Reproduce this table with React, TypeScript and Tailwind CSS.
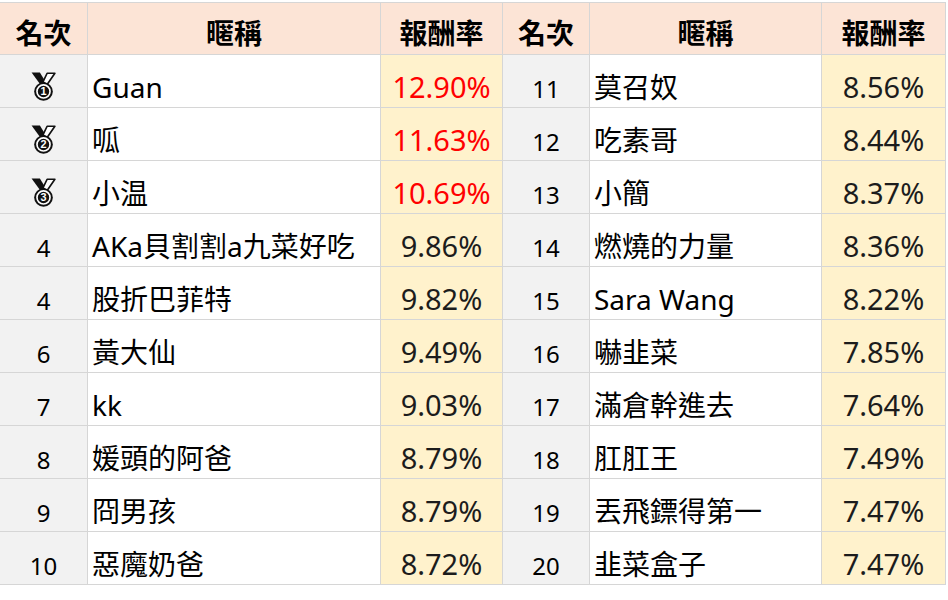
import React from 'react';

type Row = { rank: number; name: string; rate: string };

const left: Row[] = [
  { rank: 1, name: 'Guan', rate: '12.90%' },
  { rank: 2, name: '呱', rate: '11.63%' },
  { rank: 3, name: '小温', rate: '10.69%' },
  { rank: 4, name: 'AKa貝割割a九菜好吃', rate: '9.86%' },
  { rank: 4, name: '股折巴菲特', rate: '9.82%' },
  { rank: 6, name: '黃大仙', rate: '9.49%' },
  { rank: 7, name: 'kk', rate: '9.03%' },
  { rank: 8, name: '媛頭的阿爸', rate: '8.79%' },
  { rank: 9, name: '冏男孩', rate: '8.79%' },
  { rank: 10, name: '惡魔奶爸', rate: '8.72%' },
];

const right: Row[] = [
  { rank: 11, name: '莫召奴', rate: '8.56%' },
  { rank: 12, name: '吃素哥', rate: '8.44%' },
  { rank: 13, name: '小簡', rate: '8.37%' },
  { rank: 14, name: '燃燒的力量', rate: '8.36%' },
  { rank: 15, name: 'Sara Wang', rate: '8.22%' },
  { rank: 16, name: '嚇韭菜', rate: '7.85%' },
  { rank: 17, name: '滿倉幹進去', rate: '7.64%' },
  { rank: 18, name: '肛肛王', rate: '7.49%' },
  { rank: 19, name: '丟飛鏢得第一', rate: '7.47%' },
  { rank: 20, name: '韭菜盒子', rate: '7.47%' },
];

function Medal({ n }: { n: number }) {
  return (
    <svg width="25" height="29" viewBox="0 0 24 28">
      {/* ribbons */}
      <polygon points="0.5,0.5 8.5,0.5 15,11 10,13.5" fill="#111" />
      <polygon points="15.5,1.2 23,1.2 15.5,12 11.5,9.5" fill="#fff" stroke="#111" strokeWidth="1.6" strokeLinejoin="round" />
      {/* medal */}
      <circle cx="12" cy="18.8" r="9" fill="#111" />
      <circle cx="12" cy="18.8" r="6.3" fill="#111" stroke="#fff" strokeWidth="1.6" />
      <text
        x="12"
        y="22.6"
        textAnchor="middle"
        fontSize="10.5"
        fontWeight="700"
        fill="#fff"
        fontFamily="'Liberation Sans', Arial, sans-serif"
      >
        {n}
      </text>
    </svg>
  );
}

const line = 'border-b border-r border-[#d6d6d6]';

function Header() {
  const cls = `flex items-end justify-center pb-[7px] bg-[#fce4d6] font-bold text-[28px] leading-none text-black ${line}`;
  return (
    <>
      <div className={cls}>名次</div>
      <div className={cls}>暱稱</div>
      <div className={cls}>報酬率</div>
      <div className={cls}>名次</div>
      <div className={cls}>暱稱</div>
      <div className={cls}>報酬率</div>
    </>
  );
}

function Cells({ row }: { row: Row }) {
  const top = row.rank <= 3;
  return (
    <>
      <div className={`flex items-end justify-center pb-[6px] bg-[#f2f2f2] text-[24px] leading-none text-black ${line}`}>
        {top ? <Medal n={row.rank} /> : row.rank}
      </div>
      <div className={`flex items-end pl-[4px] pb-[6px] bg-white text-[28px] leading-none text-black whitespace-nowrap ${line}`}>
        {row.name}
      </div>
      <div
        className={`flex items-end justify-center pb-[6px] bg-[#fff2cc] text-[29px] leading-none ${top ? 'text-[#ff0000]' : 'text-[#1c1c1c]'} ${line}`}
      >
        {row.rate}
      </div>
    </>
  );
}

export default function App() {
  return (
    <div
      className="w-[948px] h-[600px] bg-white pt-[2px]"
      style={{ fontFamily: '"Noto Sans", "Noto Sans CJK TC", sans-serif' }}
    >
      <div className="grid grid-cols-[88px_293px_122px_87px_232px_124px] grid-rows-[52px_repeat(10,53px)] w-[946px] border-t border-[#d6d6d6]">
        <Header />
        {left.map((r, i) => (
          <React.Fragment key={i}>
            <Cells row={r} />
            <Cells row={right[i]} />
          </React.Fragment>
        ))}
      </div>
    </div>
  );
}
